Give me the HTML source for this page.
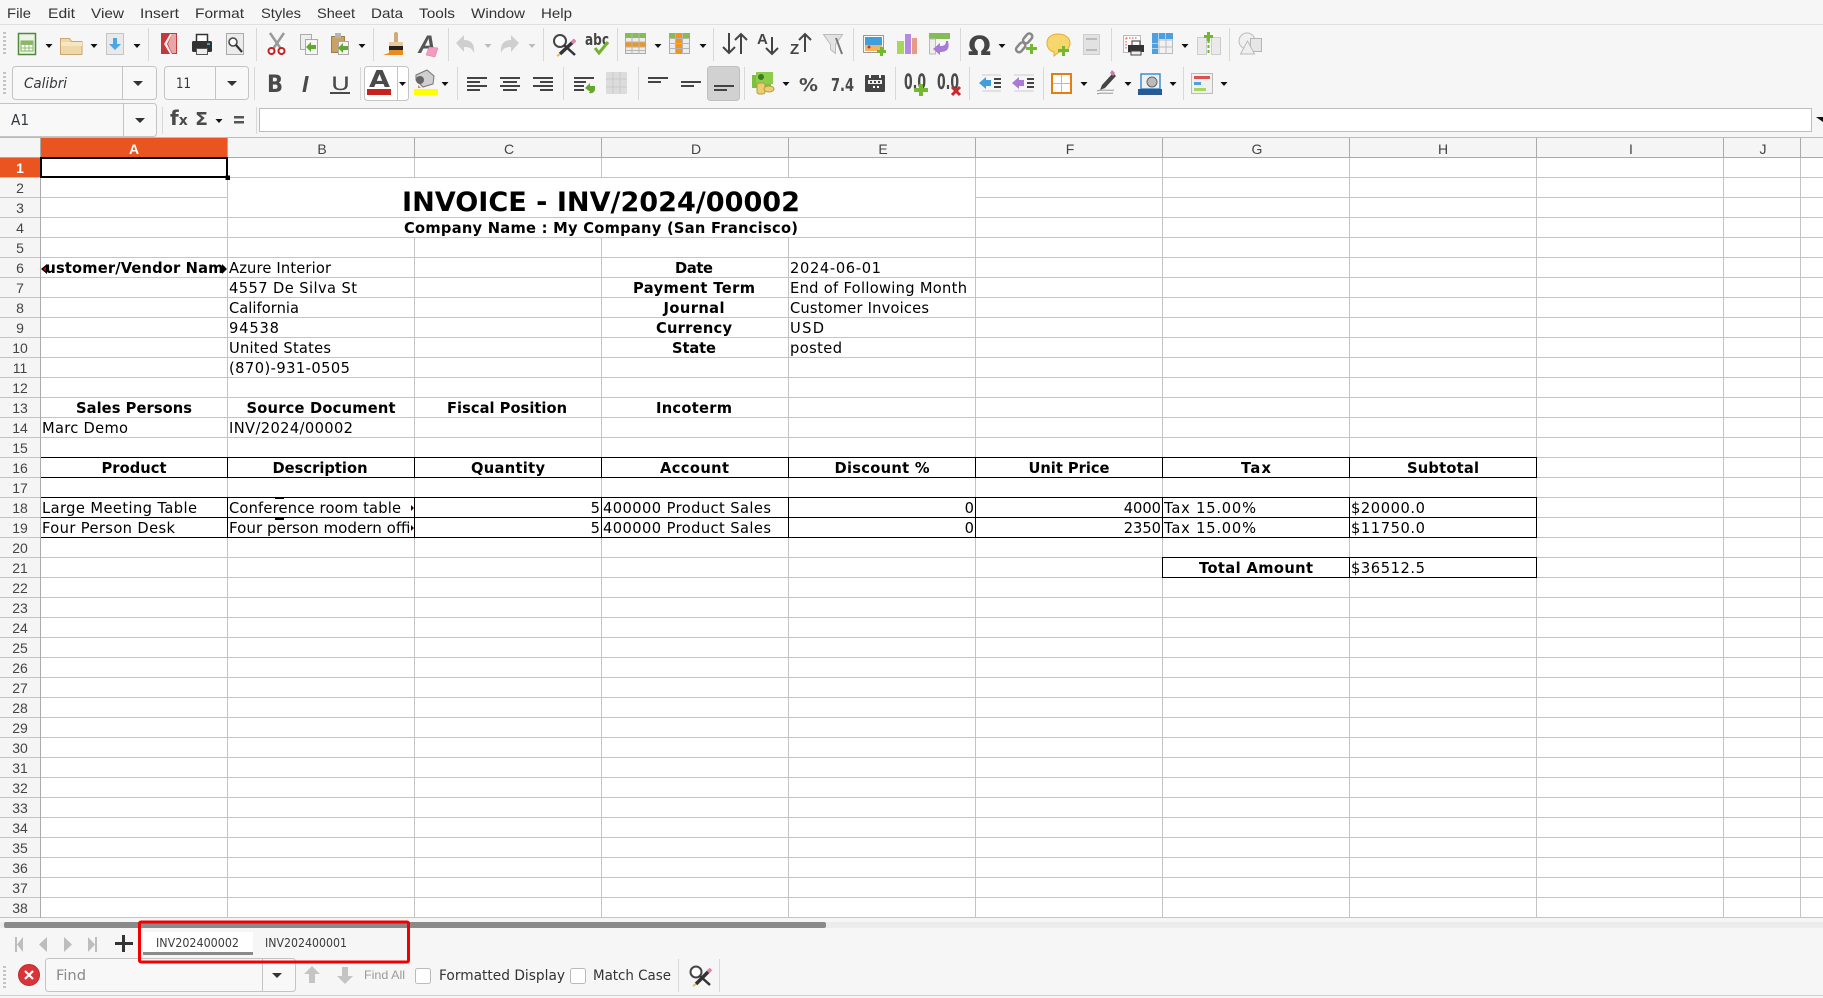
<!DOCTYPE html>
<html><head><meta charset="utf-8"><title>Invoice</title>
<style>
html,body{margin:0;padding:0;background:#f6f6f6;overflow:hidden}
svg{display:block}
.m{font:14px "Liberation Sans",sans-serif;fill:#333}
.c{font:14.67px "DejaVu Sans",sans-serif;fill:#000}
.b{font:bold 14.67px "DejaVu Sans",sans-serif;fill:#000;text-anchor:middle}
.r{text-anchor:end}
.rh{font:14px "Liberation Sans",sans-serif;fill:#444;text-anchor:middle}
.ch{font:14px "Liberation Sans",sans-serif;fill:#444;text-anchor:middle}
.s{stroke:#bdbdbd;stroke-width:1;fill:none}
</style></head><body>
<svg xmlns="http://www.w3.org/2000/svg" width="1823" height="998" viewBox="0 0 1823 998">
<defs>
<pattern id="hl" patternUnits="userSpaceOnUse" x="0" y="158" width="20" height="20"><rect x="0" y="19" width="20" height="1" fill="#c4c4c4"/></pattern>
<clipPath id="ca6"><rect x="45" y="258" width="180" height="19"/></clipPath>
<clipPath id="cb18"><rect x="228" y="498" width="183" height="39"/></clipPath>
</defs>
<rect width="1823" height="998" fill="#f6f6f6"/>
<rect y="24" width="1823" height="1" fill="#e0e0e0"/>
<!-- menu -->
<g class="m">
<text x="7" y="18" textLength="24" lengthAdjust="spacingAndGlyphs">File</text>
<text x="48" y="18" textLength="27" lengthAdjust="spacingAndGlyphs">Edit</text>
<text x="91" y="18" textLength="33" lengthAdjust="spacingAndGlyphs">View</text>
<text x="140" y="18" textLength="39" lengthAdjust="spacingAndGlyphs">Insert</text>
<text x="195" y="18" textLength="49" lengthAdjust="spacingAndGlyphs">Format</text>
<text x="261" y="18" textLength="40" lengthAdjust="spacingAndGlyphs">Styles</text>
<text x="317" y="18" textLength="38" lengthAdjust="spacingAndGlyphs">Sheet</text>
<text x="371" y="18" textLength="32" lengthAdjust="spacingAndGlyphs">Data</text>
<text x="419" y="18" textLength="36" lengthAdjust="spacingAndGlyphs">Tools</text>
<text x="471" y="18" textLength="54" lengthAdjust="spacingAndGlyphs">Window</text>
<text x="541" y="18" textLength="31" lengthAdjust="spacingAndGlyphs">Help</text>
</g>
<!-- grips -->
<path d="M3 32h3v2h-3zM3 36h3v2h-3zM3 40h3v2h-3zM3 44h3v2h-3zM3 48h3v2h-3zM3 52h3v2h-3zM3 72h3v2h-3zM3 76h3v2h-3zM3 80h3v2h-3zM3 84h3v2h-3zM3 88h3v2h-3zM3 92h3v2h-3z" fill="#c4c4c4"/>
<!-- separators -->
<path class="s" style="stroke:#d8d8d8" d="M148.500 28V61M256.500 28V61M373.500 28V61M448.500 28V61M543.500 28V61M617.500 28V61M713.500 28V61M853.500 28V61M960.500 28V61M1111.500 28V61M1229.500 28V61M254.500 67V100M360.500 67V100M457.500 67V100M563.500 67V100M638.500 67V100M744.500 67V100M895.500 67V100M969.500 67V100M1043.500 67V100M1183.500 67V100M162.500 107V134M256.500 107V134"/>
<!-- dropdown triangles -->
<path fill="#111" d="M45.500 44h7l-3.500 4zM90.500 44h7l-3.500 4zM133.500 44h7l-3.500 4zM358.500 44h7l-3.500 4zM654.500 44h7l-3.500 4zM699.500 44h7l-3.500 4zM998.500 44h7l-3.500 4zM1181.500 44h7l-3.500 4zM398.500 82h7l-3.500 4zM441.500 82h7l-3.500 4zM782.500 82h7l-3.500 4zM1080.500 82h7l-3.500 4zM1124.500 82h7l-3.500 4zM1169.500 82h7l-3.500 4zM1220.500 82h7l-3.500 4zM215.500 119h7l-3.500 4zM1816 117h7v5z"/>
<path fill="#bbb" d="M484.500 44h7l-3.500 4zM528.500 44h7l-3.500 4z"/>

<!-- ROW 1 ICONS -->
<g>
<rect x="18.500" y="33.500" width="17" height="21" fill="#eef3e6" stroke="#4f8a3c" stroke-width="1.500"/>
<rect x="21" y="41" width="12" height="10" fill="#fff" stroke="#7fae5f"/><path d="M21 44.500h12M21 48h12M25 41v10M29 41v10" stroke="#8fbb70" fill="none"/><rect x="21" y="41" width="12" height="3" fill="#86bb5c"/>
<path d="M60.500 38.500h9l2 3h10.500v13h-21.500z" fill="#f0d7a8" stroke="#c7a873"/><rect x="61" y="42" width="21" height="4" fill="#f7e6c4"/>
<rect x="106.500" y="33.500" width="17" height="21" fill="#e9e9e9" stroke="#c4c4c4"/><path d="M113 38h4v6h4l-6 6-6-6h4z" fill="#4aa6e6"/>
<rect x="161" y="33" width="16" height="21" fill="#c23a3d"/><path d="M170 34h2l-5 10 5 10h-2l-6-10z" fill="#fbeaea"/><path d="M172 34h4v19h-4l-4-9z" fill="#e9a6a6"/>
<rect x="196.500" y="34.500" width="11" height="8" fill="#fff" stroke="#333" stroke-width="1.500"/><rect x="192" y="41" width="20" height="11" rx="1.500" fill="#333"/><rect x="207" y="43" width="3" height="2" fill="#2aa9e0"/><rect x="196.500" y="48.500" width="11" height="6" fill="#eee" stroke="#555"/>
<rect x="226.500" y="33.500" width="17" height="21" fill="#ececec" stroke="#aaa"/><circle cx="233" cy="42" r="4" fill="#fff" stroke="#444" stroke-width="1.500"/><path d="M236 45l6 7" stroke="#333" stroke-width="2.200"/>
<path d="M270 33l11 16M284 33l-11 16" stroke="#9a9a9a" stroke-width="2.500" fill="none"/><circle cx="271.500" cy="51" r="3" fill="#fff" stroke="#c42020" stroke-width="2"/><circle cx="281.500" cy="51" r="3" fill="#fff" stroke="#c42020" stroke-width="2"/>
<rect x="300.500" y="34.500" width="11" height="15" fill="#eee" stroke="#aaa"/><rect x="305.500" y="39.500" width="12" height="15" fill="#f6f6f6" stroke="#aaa"/><path d="M306 47l5-5v3h5v4h-5v3z" fill="#62a82e"/>
<rect x="331.500" y="36.500" width="13" height="16" fill="#c9a265" stroke="#9d7e4c"/><rect x="335" y="33" width="6" height="5" fill="#b5b5b5"/><rect x="338.500" y="41.500" width="10" height="13" fill="#f4f4f4" stroke="#aaa"/><path d="M338 48l5-5v3h5v4h-5v3z" fill="#62a82e"/>
<rect x="394" y="32" width="4" height="11" rx="2" fill="#d1a97b"/><rect x="389" y="42" width="14" height="4" fill="#e8c99c"/><rect x="389" y="46" width="14" height="4" fill="#222"/><path d="M389 50h14v5h-20l6-2z" fill="#e98c1f"/>
<text x="418" y="53" style="font:italic bold 25px 'Liberation Sans',sans-serif;fill:#555">A</text><path d="M429 47l9 1-3 9-9-2z" fill="#f39ac0" stroke="#d97aa3" stroke-width=".500"/>
<path d="M456 43l8-8v5c7 0 11 4 10 13-2-5-5-6-10-6v5z" fill="#cfcfcf"/>
<path d="M519 43l-8-8v5c-7 0-11 4-10 13 2-5 5-6 10-6v5z" fill="#cfcfcf"/>
<circle cx="560" cy="41" r="6" fill="#fff" stroke="#444" stroke-width="2"/><path d="M564 45l11 10" stroke="#333" stroke-width="2.500"/><path d="M575 40l-15 14" stroke="#333" stroke-width="3.500"/><path d="M572 43l3-3" stroke="#e87db0" stroke-width="3.500"/><path d="M560 54l-3 2" stroke="#e7c24a" stroke-width="2"/>
<text x="585" y="45" style="font:bold 16px 'DejaVu Sans',sans-serif;fill:#444" textLength="24" lengthAdjust="spacingAndGlyphs">abc</text><path d="M595 48l4 5 9-11" stroke="#72b32f" stroke-width="3" fill="none"/>
<rect x="625.500" y="33.500" width="20" height="20" fill="#ececec" stroke="#aaa"/><rect x="625" y="33" width="21" height="5" fill="#84bd55"/><rect x="625" y="42" width="21" height="5" fill="#f1951c"/><path d="M632 33v21M639 33v21M625 42h21M625 47h21M625 50.500h21" stroke="#b5b5b5" fill="none"/>
<rect x="669.500" y="33.500" width="20" height="20" fill="#ececec" stroke="#aaa"/><rect x="669" y="33" width="21" height="5" fill="#84bd55"/><rect x="675" y="33" width="7" height="21" fill="#f1951c"/><path d="M675.500 33v21M682.500 33v21M669 38.500h21M669 43.500h21M669 48.500h21" stroke="#b5b5b5" fill="none"/>
<path d="M729 33v20M723 47l6 6 6-6M741 54V34M735 40l6-6 6 6" stroke="#444" stroke-width="2" fill="none"/>
<text x="757" y="44" style="font:bold 15px 'Liberation Sans',sans-serif;fill:#444">A</text><path d="M772 37v17M766 48l6 6 6-6" stroke="#444" stroke-width="2" fill="none"/>
<text x="790" y="54" style="font:bold 15px 'Liberation Sans',sans-serif;fill:#444">Z</text><path d="M805 52V34M799 40l6-6 6 6" stroke="#444" stroke-width="2" fill="none"/>
<path d="M823.500 34.500h19l-7 10v9l-5-4v-5z" fill="#e3e3e3" stroke="#bbb"/><path d="M836 38l6 16" stroke="#777" stroke-width="2"/>
<rect x="863.500" y="35.500" width="20" height="17" fill="#fff" stroke="#999"/><rect x="865" y="37" width="17" height="8" fill="#3f9fdc"/><rect x="865" y="45" width="17" height="6" fill="#f2b45f"/><circle cx="869" cy="47" r="1.500" fill="#d4352b"/><path d="M880 47h3v3h3v3h-3v3h-3v-3h-3v-3h3z" fill="#73b82f"/>
<rect x="897" y="41" width="7" height="13" fill="#a6d65a"/><rect x="905" y="34" width="6" height="20" fill="#b48ae0"/><rect x="912" y="38" width="5" height="16" fill="#e99a85"/>
<rect x="929" y="33" width="21" height="6" fill="#84bd55"/><path d="M929.500 39v15h6V39z" fill="#eee" stroke="#bbb"/><path d="M948 41c2 8-1 11-8 11v3l-7-6 7-6v3c4 0 6-1 6-5z" fill="#a97ad8"/>
<text x="968" y="55" style="font:bold 27px 'DejaVu Sans',sans-serif;fill:#444" textLength="23" lengthAdjust="spacingAndGlyphs">Ω</text>
<g fill="none" stroke="#888" stroke-width="2.500"><rect x="1025" y="33" width="6" height="11" rx="3" transform="rotate(40 1028 38)"/><rect x="1018" y="42" width="6" height="11" rx="3" transform="rotate(40 1021 47)"/></g><path d="M1030 44h3v3h4v3h-4v4h-3v-4h-4v-3h4z" fill="#73b82f"/>
<path d="M1047 43c0-6 5-9 11-9s12 3 12 9-5 9-11 9l-5 4v-4c-4-1-7-4-7-9z" fill="#f8d66e" stroke="#e0ad36"/><path d="M1062 46h3v3h4v3h-4v4h-3v-4h-4v-3h4z" fill="#73b82f"/>
<rect x="1083.500" y="34.500" width="16" height="20" fill="#e2e2e2" stroke="#cfcfcf"/><path d="M1086 39h11M1086 50h11" stroke="#bbb" stroke-width="2"/>
<rect x="1123.500" y="35.500" width="17" height="17" fill="#fafafa" stroke="#bbb"/><path d="M1126 38v12M1126 38h12" stroke="#d44" stroke-dasharray="1.500 1.500"/><rect x="1132" y="41" width="8" height="5" fill="#fff" stroke="#333"/><rect x="1128" y="45" width="16" height="7" fill="#333"/><rect x="1131" y="51" width="10" height="4" fill="#eee" stroke="#444"/>
<rect x="1152.500" y="33.500" width="20" height="20" fill="#f2f2f2" stroke="#bbb"/><path d="M1159 33v21M1166 33v21M1152 40h21M1152 47h21" stroke="#bcbcbc"/><rect x="1152" y="33" width="21" height="6" fill="#4d9fe0"/><rect x="1152" y="33" width="6" height="21" fill="#4d9fe0"/><path d="M1158.500 33v6M1165.500 33v6M1152 43.500h6M1152 48.500h6" stroke="#a6d2f3"/>
<rect x="1197.500" y="37.500" width="9" height="17" fill="#eaeaea" stroke="#ccc"/><rect x="1211.500" y="37.500" width="9" height="17" fill="#eaeaea" stroke="#ccc"/><path d="M1208.500 40v15" stroke="#73b82f" stroke-width="2" stroke-dasharray="3 2"/><path d="M1207 32h3v3h3v3h-3v3h-3v-3h-3v-3h3z" fill="#73b82f"/>
<circle cx="1247" cy="41" r="8" fill="#f0f0f0" stroke="#bbb"/><rect x="1250.500" y="38.500" width="11" height="13" fill="#e6e6e6" stroke="#b5b5b5"/><path d="M1247.500 41l7 13h-14z" fill="#efefef" stroke="#bbb"/>
</g>

<!-- ROW 2 -->
<rect x="12.500" y="66.500" width="144" height="33" rx="3" fill="#f8f8f8" stroke="#c4c4c4"/><path d="M122.500 67v32" stroke="#c4c4c4"/>
<rect x="164.500" y="66.500" width="84" height="33" rx="3" fill="#f8f8f8" stroke="#c4c4c4"/><path d="M215.500 67v32" stroke="#c4c4c4"/>
<path fill="#333" d="M133 81h10l-5 5zM227 81h10l-5 5z"/>
<text x="24" y="88" style="font:italic 14px 'DejaVu Sans',sans-serif;fill:#33373f" textLength="43" lengthAdjust="spacingAndGlyphs">Calibri</text>
<text x="176" y="88" style="font:14px 'DejaVu Sans',sans-serif;fill:#33373f" textLength="15" lengthAdjust="spacingAndGlyphs">11</text>
<text x="267" y="92" style="font:bold 24px 'DejaVu Sans',sans-serif;fill:#4a4a4a" textLength="16" lengthAdjust="spacingAndGlyphs">B</text>
<text x="302" y="92" style="font:italic bold 23px 'Liberation Sans',sans-serif;fill:#4a4a4a">I</text>
<text x="331" y="90" style="font:19px 'DejaVu Sans',sans-serif;fill:#4a4a4a" textLength="19" lengthAdjust="spacingAndGlyphs">U</text><rect x="330" y="92" width="20" height="2" fill="#4a4a4a"/>
<rect x="364.500" y="66.500" width="44" height="34" rx="3" fill="#fff" stroke="#c4c4c4"/><path d="M397.500 67v33" stroke="#c4c4c4"/>
<text x="369" y="87" style="font:bold 23px 'DejaVu Sans',sans-serif;fill:#4a4a4a" textLength="21" lengthAdjust="spacingAndGlyphs">A</text><rect x="367" y="89" width="24" height="6" fill="#c9211e"/>
<path fill="#111" d="M399 82h7l-3.500 4z"/>
<path d="M416 75l11-5 7 6-1 8-10 3-7-7z" fill="#cfcfcf" stroke="#777"/><ellipse cx="420" cy="80" rx="4" ry="4" fill="#666"/><path d="M418 85l3 3h-3z" fill="#e98c1f"/><rect x="414" y="89" width="24" height="6" fill="#ffff00"/>
<path fill="#444" d="M467 77h20v2h-20zM467 81h13v2h-13zM467 85h20v2h-20zM467 89h13v2h-13zM500 77h20v2h-20zM503 81h14v2h-14zM500 85h20v2h-20zM503 89h14v2h-14zM533 77h20v2h-20zM540 81h13v2h-13zM533 85h20v2h-20zM540 89h13v2h-13zM574 77h20v2h-20zM574 81h12v2h-12zM574 85h10v2h-10zM574 89h10v2h-10z"/>
<path d="M585 88l5-5v3h5v3c0 3-3 5-6 4l1-2h-1z" fill="#62a82e"/>
<rect x="606" y="72" width="21" height="22" rx="1" fill="#dcdcdc"/><path d="M613 72v22M620 72v22M606 79h21M606 87h21" stroke="#cacaca"/>
<path fill="#444" d="M648 77h20v2h-20zM648 81h13v2h-13zM681 81h20v2h-20zM681 85h13v2h-13z"/>
<rect x="707.500" y="66.500" width="32" height="34" rx="3" fill="#d1d1d1" stroke="#c0c0c0"/>
<path fill="#444" d="M714 85h20v2h-20zM714 89h13v2h-13z"/>
<rect x="752" y="75" width="19" height="13" fill="#7cc041"/><rect x="756" y="72" width="17" height="12" fill="#8ccd4b"/><circle cx="761" cy="77" r="3" fill="#3c7d22"/><rect x="757" y="83" width="8" height="11" rx="2" fill="#e9cf73" stroke="#b89a3c"/><ellipse cx="769" cy="89" rx="5" ry="3" fill="#e9cf73" stroke="#b89a3c"/>
<text x="799" y="91" style="font:bold 18px 'DejaVu Sans',sans-serif;fill:#4a4a4a" textLength="19" lengthAdjust="spacingAndGlyphs">%</text>
<text x="831" y="91" style="font:bold 18px 'DejaVu Sans',sans-serif;fill:#4a4a4a" textLength="23" lengthAdjust="spacingAndGlyphs">7.4</text>
<rect x="865" y="75" width="20" height="17" rx="1" fill="#444"/><rect x="868" y="80" width="14" height="4" fill="#eee"/><path fill="#444" d="M870 81h2v2h-2zM874 81h2v2h-2zM878 81h2v2h-2z"/><path fill="#fff" d="M873 86h2v2h-2zM877 86h2v2h-2z"/><path fill="#f6f6f6" d="M869 75h2v3h-2zM879 75h2v3h-2z"/>
<text x="904" y="89" style="font:bold 21px 'DejaVu Sans',sans-serif;fill:#4a4a4a" textLength="22" lengthAdjust="spacingAndGlyphs">0.0</text><path d="M919 84h4v4h5v4h-5v4h-4v-4h-5v-4h5z" fill="#73b82f"/>
<text x="937" y="89" style="font:bold 21px 'DejaVu Sans',sans-serif;fill:#4a4a4a" textLength="22" lengthAdjust="spacingAndGlyphs">0.0</text><path d="M952 87l8 8M960 87l-8 8" stroke="#c9272b" stroke-width="3"/>
<path d="M979 83l7-6v3h5v6h-5v3z" fill="#3f9fdc"/><path d="M994 78h7v2h-7zM994 82h7v2h-7zM994 86h7v2h-7z" fill="#444"/><path d="M982 75h19M982 91h19" stroke="#ccc"/>
<path d="M1012 83l7-6v3h5v6h-5v3z" fill="#a97ad8"/><path d="M1027 78h7v2h-7zM1027 82h7v2h-7zM1027 86h7v2h-7z" fill="#444"/><path d="M1014 75h20M1014 91h20" stroke="#ccc"/>
<rect x="1052" y="74" width="19" height="19" fill="#fff" stroke="#e67e0f" stroke-width="2"/><path d="M1061.500 75v17M1053 83.500h17" stroke="#bbb"/>
<path d="M1113 73l3 3-11 12-5 2 2-5z" fill="#444"/><path d="M1110 73l2-3 3 3-2 3z" fill="#d877b4"/><path d="M1097 91c4-2 10 0 17-1M1097 94c4-2 10 0 16-1" stroke="#999" fill="none"/>
<rect x="1141" y="74" width="19" height="15" fill="#f0f0f0" stroke="#3a8fd4" stroke-width="1.500"/><circle cx="1152" cy="82" r="5" fill="#bbb" stroke="#666"/><rect x="1138" y="89" width="24" height="6" fill="#2a5a92"/>
<rect x="1191.500" y="73.500" width="21" height="20" fill="#f0f0f0" stroke="#bbb"/><rect x="1194" y="76" width="16" height="3" fill="#d9534f"/><rect x="1194" y="82" width="7" height="3" fill="#4d9fe0"/><rect x="1194" y="88" width="12" height="3" fill="#a6d65a"/>

<!-- ROW 3 -->
<rect x="-5.500" y="103.500" width="162" height="33" rx="3" fill="#f8f8f8" stroke="#c4c4c4"/><path d="M123.500 104v32" stroke="#c4c4c4"/>
<path fill="#333" d="M135 118h10l-5 5z"/>
<text x="11" y="125" style="font:15px 'DejaVu Sans',sans-serif;fill:#33373f" textLength="18" lengthAdjust="spacingAndGlyphs">A1</text>
<text x="170" y="125" style="font:bold 20px 'DejaVu Sans',sans-serif;fill:#4a4a4a">f<tspan style="font-size:14px">x</tspan></text>
<text x="195" y="125" style="font:bold 18px 'DejaVu Sans',sans-serif;fill:#4a4a4a" textLength="13" lengthAdjust="spacingAndGlyphs">Σ</text>
<path fill="#555" d="M234 116h10v2.500h-10zM234 121h10v2.500h-10z"/>
<rect x="259.500" y="108.500" width="1552" height="23" fill="#fff" stroke="#bdbdbd"/>

<!-- SHEET -->
<rect y="137" width="1823" height="21" fill="#f5f5f5"/>
<rect y="137" width="1823" height="1" fill="#bbb"/>
<rect y="157" width="1823" height="1" fill="#aaa"/>
<rect x="41" y="158" width="1782" height="760" fill="#fff"/>
<rect x="0" y="158" width="40" height="760" fill="#f5f5f5"/>
<rect x="0" y="158" width="1823" height="760" fill="url(#hl)"/>
<rect x="40" y="137" width="1" height="781" fill="#aaa"/>
<path d="M227.500 138V157M414.500 138V157M601.500 138V157M788.500 138V157M975.500 138V157M1162.500 138V157M1349.500 138V157M1536.500 138V157M1723.500 138V157M1800.500 138V157" stroke="#aaa"/>
<path d="M227.500 158V918M414.500 158V918M601.500 158V918M788.500 158V918M975.500 158V918M1162.500 158V918M1349.500 158V918M1536.500 158V918M1723.500 158V918M1800.500 158V918" stroke="#c4c4c4"/>
<!-- merged -->
<rect x="228" y="178" width="747" height="39" fill="#fff"/>
<rect x="228" y="218" width="747" height="19" fill="#fff"/>
<!-- col header -->
<rect x="41" y="138" width="186" height="19" fill="#e95420"/>
<text class="ch" x="134" y="154" style="font-weight:bold;fill:#fff">A</text>
<text class="ch" x="322" y="154">B</text><text class="ch" x="509" y="154">C</text><text class="ch" x="696" y="154">D</text><text class="ch" x="883" y="154">E</text><text class="ch" x="1070" y="154">F</text><text class="ch" x="1257" y="154">G</text><text class="ch" x="1443" y="154">H</text><text class="ch" x="1631" y="154">I</text><text class="ch" x="1763" y="154">J</text>
<!-- row header -->
<rect x="0" y="158" width="40" height="19" fill="#e95420"/>
<text class="rh" x="20" y="173" style="font-weight:bold;fill:#fff">1</text>
<g class="rh"><text x="20" y="193">2</text><text x="20" y="213">3</text><text x="20" y="233">4</text><text x="20" y="253">5</text><text x="20" y="273">6</text><text x="20" y="293">7</text><text x="20" y="313">8</text><text x="20" y="333">9</text><text x="20" y="353">10</text><text x="20" y="373">11</text><text x="20" y="393">12</text><text x="20" y="413">13</text><text x="20" y="433">14</text><text x="20" y="453">15</text><text x="20" y="473">16</text><text x="20" y="493">17</text><text x="20" y="513">18</text><text x="20" y="533">19</text><text x="20" y="553">20</text><text x="20" y="573">21</text><text x="20" y="593">22</text><text x="20" y="613">23</text><text x="20" y="633">24</text><text x="20" y="653">25</text><text x="20" y="673">26</text><text x="20" y="693">27</text><text x="20" y="713">28</text><text x="20" y="733">29</text><text x="20" y="753">30</text><text x="20" y="773">31</text><text x="20" y="793">32</text><text x="20" y="813">33</text><text x="20" y="833">34</text><text x="20" y="853">35</text><text x="20" y="873">36</text><text x="20" y="893">37</text><text x="20" y="913">38</text></g>
<!-- selection -->
<rect x="41" y="158" width="186" height="19" fill="none" stroke="#000" stroke-width="2"/>
<rect x="225.500" y="175.500" width="4.500" height="4.500" fill="#000"/>
<!-- borders -->
<path d="M41 457.500H1536M41 477.500H1536M41 497.500H1536M41 517.500H1536M41 537.500H1536M1162 557.500H1536M1162 577.500H1536M227.500 457V478M414.500 457V478M601.500 457V478M788.500 457V478M975.500 457V478M1162.500 457V478M1349.500 457V478M1536.500 457V478M227.500 497V538M414.500 497V538M601.500 497V538M788.500 497V538M975.500 497V538M1162.500 497V538M1349.500 497V538M1536.500 497V538M1162.500 557V578M1349.500 557V578M1536.500 557V578" stroke="#000" fill="none"/>
<path d="M275 497h9v2h-9zM275 518h9v2h-9z" fill="#000"/>
<!-- cells -->
<text x="601" y="211" text-anchor="middle" style="font:bold 26.670px 'DejaVu Sans',sans-serif;fill:#000" textLength="398" lengthAdjust="spacingAndGlyphs">INVOICE - INV/2024/00002</text>
<text class="b" x="601" y="233" textLength="394">Company Name : My Company (San Francisco)</text>
<g clip-path="url(#ca6)"><text class="b" x="134" y="273" textLength="199">Customer/Vendor Name</text></g>
<path d="M41 269l6-5v10z" fill="#000"/><path d="M43 269l3-2.500v5z" fill="#c00"/><path d="M227 269l-5-5v10z" fill="#000"/>
<text class="c" x="229" y="273" textLength="102">Azure Interior</text>
<text class="c" x="229" y="293" textLength="128">4557 De Silva St</text>
<text class="c" x="229" y="313" textLength="70">California</text>
<text class="c" x="229" y="333" textLength="50">94538</text>
<text class="c" x="229" y="353" textLength="102">United States</text>
<text class="c" x="229" y="373" textLength="121">(870)-931-0505</text>
<text class="b" x="694" y="273" textLength="38">Date</text><text class="b" x="694" y="293" textLength="122">Payment Term</text><text class="b" x="694" y="313" textLength="61">Journal</text><text class="b" x="694" y="333" textLength="76">Currency</text><text class="b" x="694" y="353" textLength="44">State</text>
<text class="c" x="790" y="273" textLength="91">2024-06-01</text><text class="c" x="790" y="293" textLength="177">End of Following Month</text><text class="c" x="790" y="313" textLength="139">Customer Invoices</text><text class="c" x="790" y="333" textLength="34">USD</text><text class="c" x="790" y="353" textLength="52">posted</text>
<text class="b" x="134" y="413" textLength="116">Sales Persons</text><text class="b" x="321" y="413" textLength="149">Source Document</text><text class="b" x="507" y="413" textLength="120">Fiscal Position</text><text class="b" x="694" y="413" textLength="76">Incoterm</text>
<text class="c" x="42" y="433" textLength="86">Marc Demo</text><text class="c" x="229" y="433" textLength="124">INV/2024/00002</text>
<text class="b" x="134" y="473" textLength="65">Product</text><text class="b" x="320" y="473" textLength="95">Description</text><text class="b" x="508" y="473" textLength="74">Quantity</text><text class="b" x="694.500" y="473" textLength="69">Account</text><text class="b" x="882" y="473" textLength="95">Discount %</text><text class="b" x="1069" y="473" textLength="81">Unit Price</text><text class="b" x="1256" y="473" textLength="30">Tax</text><text class="b" x="1443" y="473" textLength="72">Subtotal</text>
<text class="c" x="42" y="513" textLength="155">Large Meeting Table</text><text class="c" x="42" y="533" textLength="133">Four Person Desk</text>
<g clip-path="url(#cb18)"><text class="c" x="229" y="513" textLength="172">Conference room table</text><text class="c" x="229" y="533" style="font-size:15.100px">Four person modern office chair</text></g>
<path d="M411 505l3 3-3 3zM411 525l3 3-3 3z" fill="#300"/>
<text class="c r" x="600" y="513" text-anchor="end">5</text><text class="c r" x="600" y="533" text-anchor="end">5</text>
<text class="c" x="603" y="513" textLength="168">400000 Product Sales</text><text class="c" x="603" y="533" textLength="168">400000 Product Sales</text>
<text class="c r" x="974" y="513" text-anchor="end">0</text><text class="c r" x="974" y="533" text-anchor="end">0</text>
<text class="c r" x="1161" y="513" text-anchor="end">4000</text><text class="c r" x="1161" y="533" text-anchor="end">2350</text>
<text class="c" x="1164" y="513" textLength="92">Tax 15.00%</text><text class="c" x="1164" y="533" textLength="92">Tax 15.00%</text>
<text class="c" x="1351" y="513" textLength="74">$20000.0</text><text class="c" x="1351" y="533" textLength="74">$11750.0</text>
<text class="b" x="1256" y="573" textLength="114">Total Amount</text><text class="c" x="1351" y="573" textLength="74">$36512.5</text>

<!-- bottom -->
<rect y="918" width="1823" height="80" fill="#f6f6f6"/>
<rect y="922" width="1823" height="6" fill="#ececec"/>
<rect x="4" y="922" width="822" height="6" rx="2" fill="#8a8a8a"/>
<!-- sheet nav -->
<path fill="#bdbdbd" d="M15 937h2v15h-2zM23 937v15l-6-7.500zM47 937v15l-8-7.500zM64 937l8 7.500-8 7.500zM88 937l7 7.500-7 7.500zM95 937h2v15h-2z"/>
<path fill="#333" d="M115 942h7v-7h3v7h8v3h-8v7h-3v-7h-7z"/>
<rect x="143" y="932" width="110" height="23" fill="#fff"/>
<rect x="143" y="952" width="110" height="3" fill="#8a8a8a"/>
<text x="156" y="947" style="font:12px 'DejaVu Sans',sans-serif;fill:#3c3c3c" textLength="83" lengthAdjust="spacingAndGlyphs">INV202400002</text>
<text x="265" y="947" style="font:12px 'DejaVu Sans',sans-serif;fill:#3c3c3c" textLength="82" lengthAdjust="spacingAndGlyphs">INV202400001</text>
<!-- find bar -->
<path d="M3 966h3v2h-3zM3 970h3v2h-3zM3 974h3v2h-3zM3 978h3v2h-3zM3 982h3v2h-3zM3 986h3v2h-3z" fill="#c4c4c4"/>
<circle cx="29" cy="975" r="10.500" fill="#d9343a" stroke="#b92a2e"/><path d="M25 971l8 8M33 971l-8 8" stroke="#fff" stroke-width="2.200"/>
<rect x="45.500" y="958.500" width="250" height="33" rx="3" fill="#f8f8f8" stroke="#c4c4c4"/><path d="M262.500 959v32" stroke="#c4c4c4"/>
<path fill="#333" d="M272 973h10l-5 5z"/>
<text x="56" y="980" style="font:14px 'DejaVu Sans',sans-serif;fill:#888" textLength="30" lengthAdjust="spacingAndGlyphs">Find</text>
<path fill="#c4c4c4" d="M312 966l8 8h-5v9h-6v-9h-5zM345 984l8-8h-5v-9h-6v9h-5z"/>
<text x="364" y="979" style="font:12px 'Liberation Sans',sans-serif;fill:#9a9a9a" textLength="41" lengthAdjust="spacingAndGlyphs">Find All</text>
<rect x="415.500" y="968.500" width="15" height="15" rx="2" fill="#fff" stroke="#bbb"/>
<text x="439" y="980" style="font:14px 'DejaVu Sans',sans-serif;fill:#333" textLength="126" lengthAdjust="spacingAndGlyphs">Formatted Display</text>
<rect x="570.500" y="968.500" width="15" height="15" rx="2" fill="#fff" stroke="#bbb"/>
<text x="593" y="980" style="font:14px 'DejaVu Sans',sans-serif;fill:#333" textLength="78" lengthAdjust="spacingAndGlyphs">Match Case</text>
<path d="M678.500 959v33M719.500 959v33" stroke="#d8d8d8"/>
<circle cx="696" cy="972" r="5.500" fill="#fff" stroke="#444" stroke-width="2"/><path d="M700 976l10 9" stroke="#333" stroke-width="2.500"/><path d="M710 970l-14 14" stroke="#333" stroke-width="3.500"/><path d="M708 972l3-3" stroke="#e87db0" stroke-width="3.500"/><path d="M696 984l-3 2" stroke="#e7c24a" stroke-width="2"/>
<rect y="995" width="1823" height="1" fill="#d0d0d0"/>
<!-- red highlight -->
<rect x="139.500" y="922" width="269" height="40" rx="1.500" fill="none" stroke="#f00000" stroke-width="3"/>
</svg>
</body></html>
